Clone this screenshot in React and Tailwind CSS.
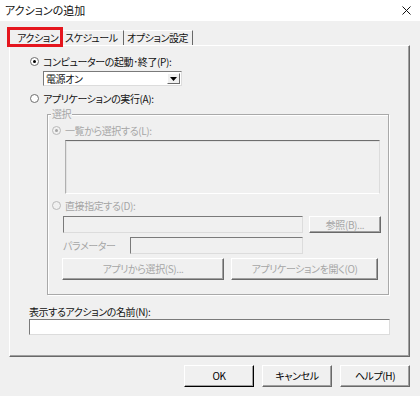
function Radio({ checked, disabled }) {
  return (
    <span
      className={`flex h-[9px] w-[9px] shrink-0 items-center justify-center rounded-full border ${
        disabled ? 'border-[#b9b9b9] bg-[#f0f0f0]' : 'border-[#6f6f6f] bg-white'
      }`}
    >
      {checked && <span className={`h-[3px] w-[3px] rounded-full ${disabled ? 'bg-[#a3a3a3]' : 'bg-black'}`} />}
    </span>
  )
}

function Field({ className = '', white, children }) {
  return (
    <div
      className={`flex items-center border border-t-[#7a7a7a] border-l-[#7a7a7a] border-r-[#dcdcdc] border-b-[#dcdcdc] ${
        white ? 'bg-white' : 'bg-[#f0f0f0]'
      } ${className}`}
    >
      {children}
    </div>
  )
}

function Button({ className = '', disabled, children }) {
  return (
    <div
      className={`flex items-center justify-center whitespace-nowrap border border-t-white border-l-white border-r-[#696969] border-b-[#696969] shadow-[inset_-1px_-1px_0_#a0a0a0] ${
        disabled ? 'text-[#a6a6a6]' : 'text-black'
      } ${className}`}
    >
      {children}
    </div>
  )
}

export default function App() {
  return (
    <div className="flex h-[396px] w-[420px] flex-col bg-[#f0f0f0] font-['Noto_Sans_CJK_JP',sans-serif] text-[10px] leading-none tracking-[-0.4px] text-[#111] [font-feature-settings:'palt']">
      {/* タイトルバー */}
      <div className="flex h-[21px] items-center justify-between bg-white pl-[5px] pr-[9px]">
        <span className="text-[11px] tracking-normal">アクションの追加</span>
        <svg width="9" height="9" viewBox="0 0 9 9">
          <path d="M0.5 0.5 L8.5 8.5 M8.5 0.5 L0.5 8.5" stroke="#111" strokeWidth="1" />
        </svg>
      </div>

      {/* タブ */}
      <div className="relative z-10 mt-[7px] ml-[9px] flex h-[17px] items-end whitespace-nowrap">
        <div className="relative -mb-[1px] flex h-[18px] w-[52px] items-center border border-b-0 border-t-white border-l-white border-r-[#696969] bg-[#f0f0f0] pl-[7px]">
          アクション
          <span className="absolute -top-[2px] -left-[3px] -right-[3px] -bottom-[1px] border-[3px] border-[#e5161e]" />
        </div>
        <div className="flex h-[15px] w-[63px] items-center border-t border-r border-t-white border-r-[#696969] pl-[4px]">
          スケジュール
        </div>
        <div className="flex h-[15px] w-[69px] items-center border-t border-r border-t-white border-r-[#696969] pl-[3px]">
          オプション設定
        </div>
      </div>

      {/* パネル */}
      <div className="ml-[9px] flex h-[312px] w-[401px] flex-col border border-t-white border-l-white border-r-[#696969] border-b-[#696969] pl-[20px] shadow-[inset_-1px_-1px_0_#a0a0a0]">
        <div className="mt-[9px] flex h-[13px] items-center gap-[4px]">
          <Radio checked />
          <span>コンピューターの起動･終了(P):</span>
        </div>
        <Field white className="mt-[3px] ml-[13px] h-[15px] w-[139px] justify-between pl-[2px] pr-[1px]">
          <span>電源オン</span>
          <span className="flex h-[11px] w-[13px] items-center justify-center border border-t-white border-l-white border-r-[#696969] border-b-[#696969] bg-[#f0f0f0]">
            <svg width="7" height="4" viewBox="0 0 7 4">
              <path d="M0 0 H7 L3.5 4 Z" fill="#000" />
            </svg>
          </span>
        </Field>
        <div className="mt-[6px] flex h-[13px] items-center gap-[4px]">
          <Radio />
          <span>アプリケーションの実行(A):</span>
        </div>

        {/* 選択 グループ */}
        <div className="relative mt-[9px] ml-[17px] flex h-[181px] w-[342px] flex-col border border-[#a9a9a9] pl-[4px] text-[#a6a6a6] shadow-[1px_1px_0_white,inset_1px_1px_0_white]">
          <span className="absolute -top-[6px] left-[3px] bg-[#f0f0f0] px-[1px]">選択</span>
          <div className="mt-[9px] flex h-[13px] items-center gap-[4px]">
            <Radio checked disabled />
            <span>一覧から選択する(L):</span>
          </div>
          <div className="mt-[3px] ml-[13px] h-[54px] w-[315px] border border-t-[#6e6e6e] border-l-[#b0b0b0] border-r-[#dcdcdc] border-b-white shadow-[inset_1px_1px_0_#e2e2e2]" />
          <div className="mt-[5px] flex h-[13px] items-center gap-[4px]">
            <Radio disabled />
            <span>直接指定する(D):</span>
          </div>
          <div className="mt-[4px] ml-[11px] flex h-[17px] gap-[6px]">
            <Field className="h-[17px] w-[240px]" />
            <Button disabled className="h-[17px] w-[72px]">
              参照(B)...
            </Button>
          </div>
          <div className="mt-[4px] ml-[11px] flex h-[17px] items-center">
            <span className="w-[67px]">パラメーター</span>
            <Field className="h-[17px] w-[173px]" />
          </div>
          <div className="mt-[4px] ml-[10px] flex h-[22px] gap-[7px]">
            <Button disabled className="h-[22px] w-[162px]">
              アプリから選択(S)...
            </Button>
            <Button disabled className="h-[22px] w-[147px]">
              アプリケーションを開く(O)
            </Button>
          </div>
        </div>

        <div className="mt-[12px] -ml-[1px] flex h-[12px] items-start">表示するアクションの名前(N):</div>
        <Field white className="-ml-[1px] h-[16px] w-[361px]" />
      </div>

      {/* ボタン */}
      <div className="mt-[8px] flex justify-end gap-[8px] pr-[10px]">
        <Button className="h-[22px] w-[70px] border-r-black border-b-black">OK</Button>
        <Button className="h-[22px] w-[70px]">キャンセル</Button>
        <Button className="h-[22px] w-[70px]">ヘルプ(H)</Button>
      </div>
    </div>
  )
}
